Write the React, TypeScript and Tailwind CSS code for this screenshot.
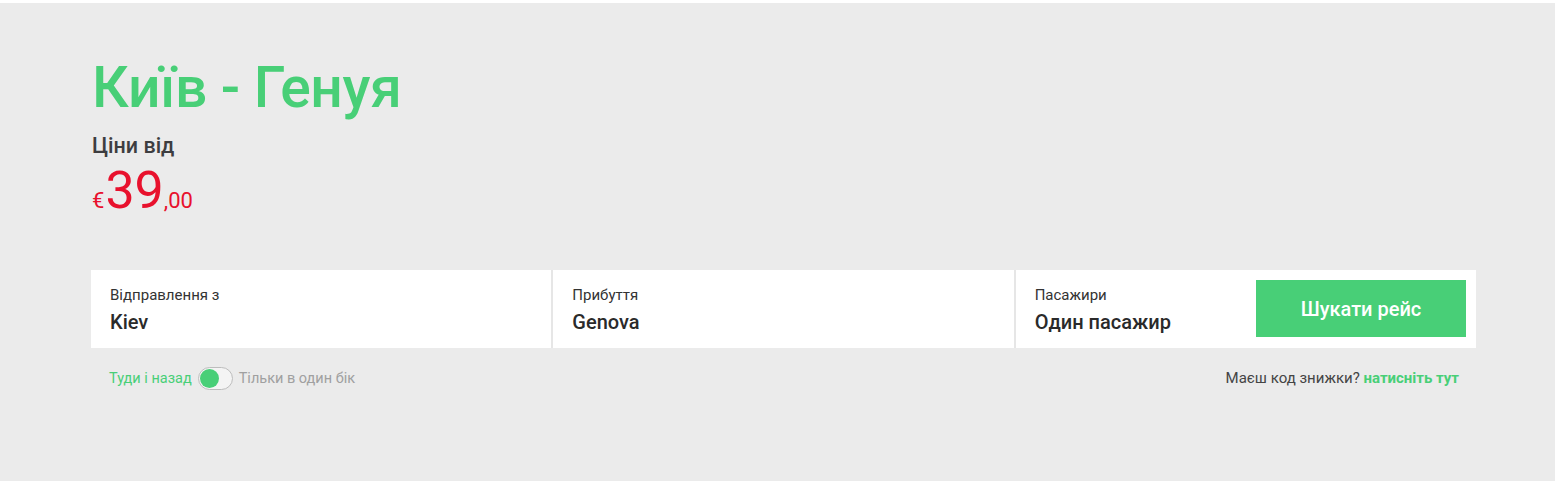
import React from "react";

export default function App() {
  const font = { fontFamily: "Roboto, 'Noto Sans', sans-serif" };
  return (
    <div className="w-[1555px] h-[481px] bg-white pt-[3px]" style={font}>
      <div className="h-[478px] bg-[#ebebeb] pl-[91px] pt-[50px]">
        <div className="w-[1385px]">
          <h1 className="text-[57px] leading-[70px] font-medium text-[#48cf77] pl-[1px] tracking-[-0.3px]">Київ - Генуя</h1>
          <div className="mt-[11px] text-[21.5px] leading-[24px] font-medium text-[#3d3d40] pl-[1px]">Ціни від</div>
          <div className="flex items-baseline text-[#e8112d] leading-none mt-[7px] pl-[1px]">
            <span className="text-[22px]">€</span>
            <span className="text-[52px] ml-[1px]">39</span>
            <span className="text-[22px]">,00</span>
          </div>
          <div className="mt-[53px] grid grid-cols-3 h-[78px] gap-[2px] bg-[#e6e6e6]">
            <div className="bg-white pl-[19px] pt-[16px]">
              <div className="text-[15px] leading-[18px] text-[#333]">Відправлення з</div>
              <div className="mt-[6px] text-[20px] leading-[24px] font-medium text-[#2a2a2a]">Kiev</div>
            </div>
            <div className="bg-white pl-[19px] pt-[16px]">
              <div className="text-[15px] leading-[18px] text-[#333]">Прибуття</div>
              <div className="mt-[6px] text-[20px] leading-[24px] font-medium text-[#2a2a2a]">Genova</div>
            </div>
            <div className="bg-white pl-[19px] pr-[10px] flex items-center justify-between">
              <div className="pt-[2px]">
                <div className="text-[15px] leading-[18px] text-[#333]">Пасажири</div>
                <div className="mt-[6px] text-[20px] leading-[24px] font-medium text-[#2a2a2a]">Один пасажир</div>
              </div>
              <button className="w-[210px] h-[57px] bg-[#48cf77] text-white text-[20px] font-medium mb-[1px]">Шукати рейс</button>
            </div>
          </div>
          <div className="mt-[19px] flex items-center justify-between pl-[18px] pr-[17px]">
            <div className="flex items-center text-[14.5px]">
              <span className="text-[#48cf77]">Туди і назад</span>
              <span className="ml-[6px] w-[35px] h-[23px] rounded-full border border-[#bdbdbd] bg-[#f4f4f4] flex items-center pl-[1px]">
                <span className="w-[19px] h-[19px] rounded-full bg-[#48cf77]"></span>
              </span>
              <span className="ml-[6px] text-[#a0a0a0]">Тільки в один бік</span>
            </div>
            <div className="text-[15px]">
              <span className="text-[#444]">Маєш код знижки? </span>
              <span className="text-[#48cf77] font-bold">натисніть тут</span>
            </div>
          </div>
        </div>
      </div>
    </div>
  );
}
